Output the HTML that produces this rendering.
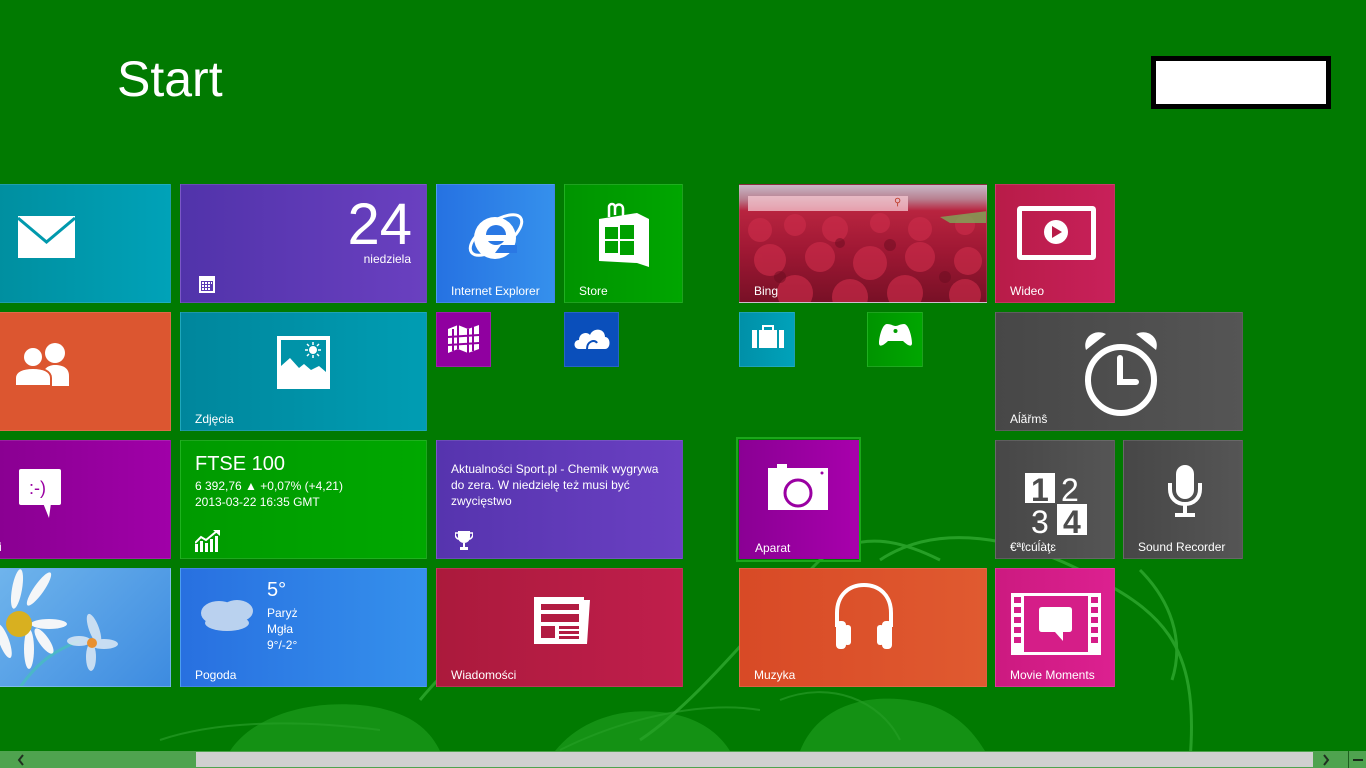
<!DOCTYPE html>
<html><head><meta charset="utf-8"><style>
*{margin:0;padding:0;box-sizing:border-box}
body{width:1366px;height:768px;overflow:hidden;background:#017a01;font-family:"Liberation Sans","DejaVu Sans",sans-serif;color:#fff;position:relative}
.t{position:absolute;overflow:hidden;border:1px solid rgba(255,255,255,.12)}
.l{position:absolute;left:14px;bottom:4px;font-size:12px;white-space:nowrap}
svg{position:absolute}
</style></head><body>
<svg width="1366" height="768" style="left:0;top:0">
<g fill="none" stroke="#3fb83f" stroke-width="3" opacity=".6">
<path d="M880 560 C940 520,1020 540,1080 570 C1160 610,1200 640,1190 760"/>
<path d="M640 740 C700 700,760 620,820 560 C860 530,900 540,940 560"/>
<path d="M420 700 C470 640,520 610,600 620"/>
<path d="M1140 570 C1170 600,1185 640,1172 680"/>
</g>
<g fill="none" stroke="#2fa02f" stroke-width="2" opacity=".6">
<path d="M560 750 C620 720,700 700,760 710"/>
<path d="M160 740 C220 720,300 720,380 730"/>
<path d="M780 700 C830 680,880 700,900 740"/>
</g>
<g fill="#21a021" opacity=".6">
<path d="M230 751 C250 720,300 700,360 705 C410 710,430 730,440 751Z"/>
<path d="M800 751 C820 700,880 690,930 705 C960 715,975 735,985 751Z"/>
<path d="M555 751 C580 720,620 708,660 712 C700 716,720 735,730 751Z"/>
</g>
</svg>

<div style="position:absolute;left:117px;top:50px;font-size:50px;font-weight:300;letter-spacing:0px">Start</div>
<div style="position:absolute;left:1151px;top:56px;width:180px;height:53px;background:#fff;border:5px solid #000"></div>

<!-- col0 -->
<div class="t" style="left:-2px;top:184px;width:173px;height:119px;background:linear-gradient(90deg,#008fa0,#00a2b8)">
<svg style="left:19px;top:31px" width="57" height="42" viewBox="0 0 57 42"><rect width="57" height="42" fill="#fff"/><path d="M0 2 L28.5 26 L57 2" fill="none" stroke="#0099ad" stroke-width="3"/></svg></div>
<div class="t" style="left:-2px;top:312px;width:173px;height:119px;background:#dc5630">
<svg style="left:14px;top:27px" width="64" height="46" viewBox="0 0 64 46"><circle cx="42" cy="13" r="10" fill="#fff"/><path d="M30 46 L30 36 C30 28,36 25,42 25 C50 25,56 28,56 36 L56 46Z" fill="#fff"/><circle cx="20" cy="17" r="11" fill="#dc5630"/><circle cx="20" cy="17" r="9" fill="#fff"/><path d="M2 46 L2 38 C2 31,10 28,20 28 C30 28,38 31,38 38 L38 46Z" fill="#fff" stroke="#dc5630" stroke-width="2"/></svg></div>
<div class="t" style="left:-2px;top:440px;width:173px;height:119px;background:linear-gradient(90deg,#8a0092,#a000a8)">
<svg style="left:20px;top:28px" width="44" height="52" viewBox="0 0 44 52"><rect x="0" y="0" width="42" height="36" rx="2" fill="#fff"/><path d="M24 34 L30 49 L32 34Z" fill="#fff"/><text x="10" y="25" font-size="18" fill="#9a00a2" font-family="Liberation Sans">:-)</text></svg>
<div class="l" style="left:0">i</div></div>
<div class="t" style="left:-2px;top:568px;width:173px;height:119px;background:linear-gradient(135deg,#6fb4ec,#3d8be0)">
<svg style="left:0;top:0" width="173" height="119"><path d="M20 120 C40 90,60 80,80 72" stroke="#4bb7c8" stroke-width="3" fill="none"/>
<g fill="#f4f6f8"><ellipse cx="18" cy="20" rx="5" ry="20" transform="rotate(10 18 20)"/><ellipse cx="40" cy="20" rx="5" ry="20" transform="rotate(35 40 20)"/><ellipse cx="50" cy="55" rx="18" ry="5"/><ellipse cx="30" cy="80" rx="5" ry="20"/><ellipse cx="5" cy="72" rx="5" ry="18" transform="rotate(-20 5 72)"/><ellipse cx="45" cy="72" rx="5" ry="15" transform="rotate(-35 45 72)"/></g>
<circle cx="20" cy="55" r="13" fill="#d8b020"/>
<g fill="#e6eef6" opacity=".8"><ellipse cx="95" cy="60" rx="5" ry="16" transform="rotate(-20 95 60)"/><ellipse cx="105" cy="75" rx="14" ry="5"/><ellipse cx="92" cy="88" rx="5" ry="14"/><ellipse cx="80" cy="72" rx="12" ry="5"/></g>
<circle cx="93" cy="74" r="5" fill="#e89030"/></svg></div>

<!-- col1 -->
<div class="t" style="left:180px;top:184px;width:247px;height:119px;background:linear-gradient(90deg,#5133aa,#6a40c0)">
<div style="position:absolute;right:14px;top:8px;font-size:58px;font-weight:300;line-height:64px">24</div>
<div style="position:absolute;right:15px;top:67px;font-size:12px">niedziela</div>
<svg style="left:18px;top:91px" width="16" height="17"><rect width="16" height="17" fill="#fff"/><g fill="#5a38b2"><rect x="2" y="5" width="12" height="10"/></g><g fill="#fff"><rect x="3" y="6" width="2" height="2"/><rect x="6" y="6" width="2" height="2"/><rect x="9" y="6" width="2" height="2"/><rect x="12" y="6" width="1" height="2"/><rect x="3" y="9" width="2" height="2"/><rect x="6" y="9" width="2" height="2"/><rect x="9" y="9" width="2" height="2"/><rect x="3" y="12" width="2" height="2"/><rect x="6" y="12" width="2" height="2"/><rect x="9" y="12" width="2" height="2"/></g></svg></div>
<div class="t" style="left:180px;top:312px;width:247px;height:119px;background:linear-gradient(90deg,#00869c,#009db3)">
<svg style="left:96px;top:23px" width="53" height="53" viewBox="0 0 53 53"><rect width="53" height="53" fill="#fff"/><rect x="4" y="4" width="45" height="39" fill="#0093a8"/><path d="M4 43 L4 30 L13 22 L22 32 L27 28 L34 34 L42 30 L49 36 L49 43Z" fill="#fff"/><circle cx="36" cy="14" r="4" fill="#fff"/><g stroke="#fff" stroke-width="1.5"><path d="M36 6v3M36 19v3M28 14h3M41 14h3M30 8l2 2M40 18l2 2M42 8l-2 2M30 20l2-2"/></g></svg>
<div class="l">Zdjęcia</div></div>
<div class="t" style="left:180px;top:440px;width:247px;height:119px;background:linear-gradient(90deg,#009a00,#00a800)">
<div style="position:absolute;left:14px;top:12px;font-size:20px;font-weight:300">FTSE 100</div>
<div style="position:absolute;left:14px;top:37px;font-size:12px;line-height:16px">6 392,76 ▲ +0,07% (+4,21)<br>2013-03-22 16:35 GMT</div>
<svg style="left:14px;top:89px" width="26" height="22" viewBox="0 0 26 22"><g fill="#fff"><rect x="0" y="14" width="3" height="8"/><rect x="5" y="11" width="3" height="11"/><rect x="10" y="13" width="3" height="9"/><rect x="15" y="9" width="3" height="13"/><rect x="20" y="6" width="3" height="16"/></g><path d="M0 13 L6 7 L11 10 L22 1" stroke="#fff" stroke-width="2" fill="none"/><path d="M18 0 L25 0 L25 6Z" fill="#fff"/></svg></div>
<div class="t" style="left:180px;top:568px;width:247px;height:119px;background:linear-gradient(90deg,#2870e0,#3590ec)">
<svg style="left:16px;top:22px" width="66" height="44"><g fill="#d4e2f2" opacity=".85"><ellipse cx="22" cy="22" rx="18" ry="12"/><ellipse cx="40" cy="20" rx="16" ry="11"/><ellipse cx="30" cy="32" rx="22" ry="8"/></g></svg>
<div style="position:absolute;left:86px;top:10px;font-size:20px;font-weight:300">5°</div>
<div style="position:absolute;left:86px;top:36px;font-size:12px;line-height:16px">Paryż<br>Mgła<br>9°/-2°</div>
<div class="l">Pogoda</div></div>

<!-- col2 -->
<div class="t" style="left:436px;top:184px;width:119px;height:119px;background:linear-gradient(90deg,#2672e2,#3590ec)">
<svg style="left:28px;top:20px" width="62" height="62" viewBox="0 0 62 62"><ellipse cx="31" cy="30" rx="30" ry="13" transform="rotate(-35 31 30)" fill="none" stroke="#fff" stroke-width="3"/><circle cx="30" cy="33" r="21" fill="#fff"/><circle cx="31" cy="30" r="10" fill="#2a78e4"/><rect x="18" y="30" width="30" height="6" fill="#fff"/><path d="M36 40 L52 40 L52 48 L30 48Z" fill="#2a78e4"/></svg>
<div class="l">Internet Explorer</div></div>
<div class="t" style="left:564px;top:184px;width:119px;height:119px;background:linear-gradient(90deg,#009400,#00a600)">
<svg style="left:32px;top:16px" width="56" height="68" viewBox="0 0 56 68"><path d="M12 16 L12 6 C12 2,18 2,18 6 L18 14 M18 8 C18 2,26 2,26 8 L26 18" stroke="#fff" stroke-width="2.5" fill="none"/><path d="M2 18 L40 12 L52 18 L52 66 L40 62 L2 60Z" fill="#fff"/><g fill="#00a000"><rect x="8" y="26" width="13" height="12"/><rect x="23" y="24" width="14" height="14"/><rect x="8" y="40" width="13" height="12"/><rect x="23" y="40" width="14" height="14"/></g></svg>
<div class="l">Store</div></div>
<div class="t" style="left:436px;top:312px;width:55px;height:55px;background:#9000a0">
<svg style="left:11px;top:12px" width="32" height="28" viewBox="0 0 32 28"><path d="M0 4 L10 0 L20 4 L31 0 L31 24 L20 28 L10 24 L0 28Z" fill="#fff"/><g stroke="#9000a0" stroke-width="2" fill="none"><path d="M10 0 L10 24 M20 4 L20 28 M0 12 L31 10 M0 20 L31 18 M5 4 L5 26 M25 2 L25 26"/></g></svg></div>
<div class="t" style="left:564px;top:312px;width:55px;height:55px;background:#0a4fbb">
<svg style="left:8px;top:12px" width="38" height="26" viewBox="0 0 38 26"><path d="M6 24 C0 24,0 15,6 15 C6 8,14 6,17 10 C20 2,32 3,32 12 C38 12,38 24,32 24Z" fill="#fff"/><path d="M14 24 C14 16,22 14,24 18" stroke="#0a4fbb" stroke-width="2" fill="none"/></svg></div>
<div class="t" style="left:436px;top:440px;width:247px;height:119px;background:linear-gradient(90deg,#5634ae,#6a40c2)">
<div style="position:absolute;left:14px;top:20px;font-size:12px;line-height:16px;white-space:nowrap">Aktualności Sport.pl - Chemik wygrywa<br>do zera. W niedzielę też musi być<br>zwycięstwo</div>
<svg style="left:18px;top:90px" width="18" height="19" viewBox="0 0 18 19"><path d="M3 0 L15 0 L15 6 C15 10,12 12,9 12 C6 12,3 10,3 6Z" fill="#fff"/><path d="M3 2 L0 2 C0 6,2 8,4 8 M15 2 L18 2 C18 6,16 8,14 8" stroke="#fff" stroke-width="1.5" fill="none"/><rect x="8" y="12" width="2" height="4" fill="#fff"/><rect x="5" y="16" width="8" height="3" fill="#fff"/></svg></div>
<div class="t" style="left:436px;top:568px;width:247px;height:119px;background:linear-gradient(90deg,#ab1a3c,#c01e4c)">
<svg style="left:95px;top:28px" width="60" height="47" viewBox="0 0 60 47"><path d="M2 0 L52 0 L52 3 L58 3 L55 47 L2 47Z" fill="#fff"/><g fill="#b21c42"><rect x="9" y="7" width="38" height="6"/><rect x="9" y="17" width="38" height="8"/><rect x="9" y="29" width="14" height="12"/><rect x="27" y="29" width="20" height="3"/><rect x="27" y="34" width="20" height="3"/><rect x="27" y="39" width="20" height="3"/></g></svg>
<div class="l">Wiadomości</div></div>

<!-- col3 -->
<div class="t" style="left:739px;top:184px;width:248px;height:119px;background:linear-gradient(180deg,#c8b8c8 0%,#b88090 12%,#b8243f 22%,#a01834 55%,#781026 100%)">
<svg style="left:0;top:0" width="248" height="119"><g fill="#cc2c4a" opacity=".65"><circle cx="20" cy="45" r="12"/><circle cx="55" cy="40" r="11"/><circle cx="95" cy="44" r="13"/><circle cx="140" cy="38" r="10"/><circle cx="180" cy="44" r="12"/><circle cx="225" cy="40" r="10"/><circle cx="30" cy="75" r="16"/><circle cx="80" cy="72" r="15"/><circle cx="130" cy="78" r="17"/><circle cx="180" cy="72" r="15"/><circle cx="228" cy="76" r="14"/><circle cx="55" cy="108" r="18"/><circle cx="110" cy="112" r="18"/><circle cx="165" cy="108" r="18"/><circle cx="225" cy="110" r="16"/></g><g fill="#6a0c20" opacity=".5"><circle cx="40" cy="92" r="6"/><circle cx="150" cy="60" r="6"/><circle cx="205" cy="92" r="6"/><circle cx="100" cy="58" r="5"/></g><path d="M200 32 L248 26 L248 38 L210 38Z" fill="#7ea858" opacity=".8"/></svg>
<div style="position:absolute;left:8px;top:11px;width:160px;height:15px;background:rgba(245,200,210,.75)"></div>
<div style="position:absolute;left:154px;top:12px;font-size:10px;color:#c04030">⚲</div>
<div class="l">Bing</div></div>
<div class="t" style="left:995px;top:184px;width:120px;height:119px;background:linear-gradient(90deg,#b81c48,#c8205a)">
<svg style="left:21px;top:21px" width="79" height="55" viewBox="0 0 79 55"><rect x="2.5" y="2.5" width="74" height="49" fill="none" stroke="#fff" stroke-width="5" rx="1"/><circle cx="39" cy="26" r="12" fill="#fff"/><path d="M35 20 L45 26 L35 32Z" fill="#b81c48"/></svg>
<div class="l">Wideo</div></div>
<div class="t" style="left:739px;top:312px;width:56px;height:55px;background:linear-gradient(90deg,#0090a8,#00a2ba)">
<svg style="left:12px;top:12px" width="32" height="23" viewBox="0 0 32 23"><path d="M11 5 L11 1 L21 1 L21 5" stroke="#fff" stroke-width="2" fill="none"/><rect x="0" y="5" width="32" height="18" fill="#fff"/><rect x="5" y="5" width="2" height="18" fill="#009aaf"/><rect x="25" y="5" width="2" height="18" fill="#009aaf"/></svg></div>
<div class="t" style="left:867px;top:312px;width:56px;height:55px;background:linear-gradient(90deg,#009400,#00a600)">
<svg style="left:11px;top:11px" width="33" height="23" viewBox="0 0 33 23"><path d="M8 0 C12 0,14 2,16.5 2 C19 2,21 0,25 0 C30 0,33 14,33 19 C33 24,28 21,24 17 L9 17 C5 21,0 24,0 19 C0 14,3 0,8 0Z" fill="#fff"/><circle cx="16.5" cy="7" r="2" fill="#009e00"/></svg></div>
<div class="t" style="left:995px;top:312px;width:248px;height:119px;background:linear-gradient(90deg,#474747,#555)">
<svg style="left:86px;top:15px" width="78" height="90" viewBox="0 0 78 90"><path d="M4 22 C0 10,12 0,24 6Z" fill="#fff"/><path d="M74 22 C78 10,66 0,54 6Z" fill="#fff"/><circle cx="39" cy="52" r="33" fill="none" stroke="#fff" stroke-width="6"/><path d="M38 30 L38 54 L54 54" stroke="#fff" stroke-width="6" fill="none" stroke-linecap="round"/></svg>
<div class="l">Aĺăřmŝ</div></div>
<div style="position:absolute;left:736px;top:437px;width:125px;height:125px;border:2px solid #1aa81a"></div>
<div class="t" style="left:739px;top:440px;width:120px;height:119px;background:linear-gradient(90deg,#8a0094,#a800ac);border:none">
<svg style="left:29px;top:24px" width="60" height="46" viewBox="0 0 60 46"><rect x="0" y="4" width="60" height="42" fill="#fff"/><rect x="9" y="0" width="10" height="4" fill="#fff"/><circle cx="30" cy="29" r="13" fill="none" stroke="#9a00a2" stroke-width="3"/><circle cx="54" cy="9" r="1.5" fill="#9a00a2"/></svg>
<div class="l" style="left:16px">Aparat</div></div>
<div class="t" style="left:995px;top:440px;width:120px;height:119px;background:linear-gradient(90deg,#474747,#555)">
<svg style="left:29px;top:32px" width="62" height="62" viewBox="0 0 62 62"><rect x="0" y="0" width="30" height="30" fill="#fff"/><rect x="32" y="31" width="30" height="31" fill="#fff"/><g font-family="Liberation Sans" font-size="32"><text x="6" y="28" fill="#4c4c4c" font-weight="bold">1</text><text x="36" y="28" fill="#fff">2</text><text x="6" y="60" fill="#fff">3</text><text x="38" y="60" fill="#4c4c4c" font-weight="bold">4</text></g></svg>
<div class="l">€ªℓcúĺàţɛ</div></div>
<div class="t" style="left:1123px;top:440px;width:120px;height:119px;background:linear-gradient(90deg,#474747,#555)">
<svg style="left:43px;top:24px" width="36" height="56" viewBox="0 0 36 56"><rect x="9" y="0" width="18" height="34" rx="9" fill="#fff"/><path d="M3 18 L3 24 C3 33,9 39,18 39 C27 39,33 33,33 24 L33 18" stroke="#fff" stroke-width="4" fill="none"/><rect x="16" y="39" width="4" height="10" fill="#fff"/><rect x="8" y="48" width="20" height="4" fill="#fff"/></svg>
<div class="l">Sound Recorder</div></div>
<div class="t" style="left:739px;top:568px;width:248px;height:119px;background:linear-gradient(90deg,#d84a26,#e05a30)">
<svg style="left:92px;top:14px" width="64" height="66" viewBox="0 0 64 66"><path d="M5 44 L5 30 C5 12,17 2,32 2 C47 2,59 12,59 30 L59 44" stroke="#fff" stroke-width="4" fill="none"/><rect x="4" y="38" width="10" height="28" rx="4" fill="#fff"/><rect x="50" y="38" width="10" height="28" rx="4" fill="#fff"/><rect x="12" y="42" width="7" height="20" rx="3" fill="#fff"/><rect x="45" y="42" width="7" height="20" rx="3" fill="#fff"/></svg>
<div class="l">Muzyka</div></div>
<div class="t" style="left:995px;top:568px;width:120px;height:119px;background:linear-gradient(90deg,#cc1a80,#dc2090)">
<svg style="left:15px;top:24px" width="90" height="62" viewBox="0 0 90 62"><rect x="0" y="0" width="90" height="62" fill="#fff"/><rect x="13" y="3" width="64" height="56" fill="#d51e88"/><g fill="#d51e88"><rect x="3" y="4" width="7" height="6"/><rect x="3" y="14" width="7" height="6"/><rect x="3" y="24" width="7" height="6"/><rect x="3" y="34" width="7" height="6"/><rect x="3" y="44" width="7" height="6"/><rect x="80" y="4" width="7" height="6"/><rect x="80" y="14" width="7" height="6"/><rect x="80" y="24" width="7" height="6"/><rect x="80" y="34" width="7" height="6"/><rect x="80" y="44" width="7" height="6"/></g><path d="M28 17 Q28 14,31 14 L58 14 Q61 14,61 17 L61 36 Q61 39,58 39 L52 39 L52 48 L44 39 L31 39 Q28 39,28 36Z" fill="#fff"/></svg>
<div class="l">Movie Moments</div></div>

<!-- scrollbar -->
<div style="position:absolute;left:0;top:751px;width:1366px;height:17px;background:#4fa34f"></div>
<div style="position:absolute;left:196px;top:752px;width:1117px;height:15px;background:#d0d0d0"></div>
<svg style="left:17px;top:754px" width="8" height="12"><path d="M6 1 L2 6 L6 11" stroke="#203020" stroke-width="2" fill="none"/></svg>
<svg style="left:1322px;top:754px" width="8" height="12"><path d="M2 1 L6 6 L2 11" stroke="#203020" stroke-width="2" fill="none"/></svg>
<div style="position:absolute;left:1348px;top:751px;width:1px;height:17px;background:#1e5e1e"></div>
<div style="position:absolute;left:1353px;top:759px;width:10px;height:2px;background:#1a2a1a"></div>
</body></html>
